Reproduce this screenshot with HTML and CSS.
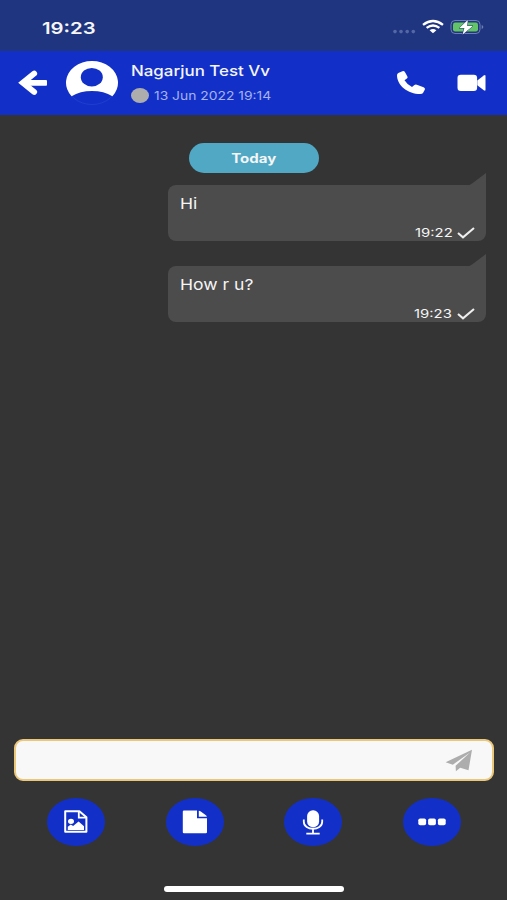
FILE: index.html
```html
<!DOCTYPE html>
<html lang="en">
<head>
<meta charset="utf-8">
<title>Chat</title>
<link rel="stylesheet" href="styles.css">
</head>
<body>
  <div class="statusbar">
    <span class="clock wide">19:23</span>
    <svg class="status-icons" width="92" height="20" viewBox="0 0 92 20">
      <g fill="#5568a5">
        <circle cx="3" cy="13.6" r="1.8"/><circle cx="9" cy="13.6" r="1.8"/><circle cx="15.2" cy="13.6" r="1.8"/><circle cx="21.3" cy="13.6" r="1.8"/>
      </g>
      <g fill="none" stroke="#fff" stroke-width="2.3">
        <path d="M31 6.9Q41 -.9 51 6.9"/>
        <path d="M34.6 9.9Q41 5 47.4 9.9"/>
      </g>
      <path fill="#fff" d="M37.6 12.2Q41 9.7 44.4 12.2L41 15.2z"/>
      <rect x="59" y="2.5" width="29" height="13" rx="4" fill="none" stroke="#6b80b0"/>
      <rect x="61" y="4.5" width="25" height="9" rx="2.2" fill="#62c466"/>
      <path d="M89.7 7v4q1.6-.6 1.6-2t-1.6-2z" fill="#6b80b0"/>
      <path d="M75.8 2L67.4 10h5l-1.8 6.4L80.8 8h-5.6z" fill="#fff" stroke="#203580" stroke-width="1" paint-order="stroke"/>
    </svg>
  </div>

  <div class="header">
    <svg class="back" width="30" height="28" viewBox="0 0 30 28">
      <path d="M16.2 4.6L4.8 13.8L16.2 23" fill="none" stroke="#fff" stroke-width="5.8" stroke-linecap="round"/>
      <rect x="6" y="10.9" width="23" height="5.8" rx="1" fill="#fff"/>
    </svg>
    <svg class="avatar" width="52" height="44" viewBox="0 0 52 44">
      <ellipse cx="26" cy="22" rx="25.6" ry="21.5" fill="#1230c8" stroke="#2b48cf" stroke-width=".6"/>
      <path fill="#fff" d="M5.6 35.2A26 21.7 0 1 1 46.4 35.2Q38 30 26 30T5.6 35.2z"/>
      <ellipse cx="25.8" cy="16.2" rx="11" ry="9.3" fill="#1230c8"/>
    </svg>
    <div class="contact">
      <div class="name"><span class="wide">Nagarjun Test Vv</span></div>
      <div class="seen"><i class="presence"></i><span class="wide">13 Jun 2022 19:14</span></div>
    </div>
    <svg class="call" width="30" height="26" viewBox="0 0 30 26">
      <path fill="#fff" d="M2.3 3.1L6.4 1.2Q8 .6 8.9 2.1L11.4 6.4Q12 7.6 10.9 8.5L8.5 10.2Q11.1 14.4 16 17.1L18.4 15.1Q19.3 14.3 20.8 14.8L27.6 17.3Q29.4 18.1 28.9 19.6L27 23Q26.4 24 24.2 24C12 24 1 15.5 1 5.2Q1 3.8 2.3 3.1z"/>
    </svg>
    <svg class="video" width="29" height="18" viewBox="0 0 29 18">
      <rect x=".5" y=".8" width="19.6" height="16.2" rx="3.3" fill="#fff"/>
      <path fill="#fff" d="M20.3 6.5L26.8 1.4Q28.5.4 28.5 2V15.7Q28.5 17.3 26.8 16.2L20.3 11.2z"/>
    </svg>
  </div>

  <div class="messages">
    <div class="day"><span>Today</span></div>
    <div class="bubble">
      <svg class="tail" width="20" height="13" viewBox="0 0 20 13"><path fill="#4c4c4c" d="M0 13Q3 12.6 6 10.5L20 0V13z"/></svg>
      <div class="text"><span class="wide">Hi</span></div>
      <div class="meta"><span class="wide">19:22</span><svg width="18" height="12" viewBox="0 0 18 12"><path d="M1 6l5 4.3L17 1" fill="none" stroke="#eee" stroke-width="2.1"/></svg></div>
    </div>
    <div class="bubble">
      <svg class="tail" width="20" height="13" viewBox="0 0 20 13"><path fill="#4c4c4c" d="M0 13Q3 12.6 6 10.5L20 0V13z"/></svg>
      <div class="text"><span class="wide">How r u?</span></div>
      <div class="meta"><span class="wide">19:23</span><svg width="18" height="12" viewBox="0 0 18 12"><path d="M1 6l5 4.3L17 1" fill="none" stroke="#eee" stroke-width="2.1"/></svg></div>
    </div>
  </div>

  <div class="composer">
    <svg width="28" height="23" viewBox="0 0 28 23">
      <path fill="#adadad" d="M27 .8L.6 13.2l7.2 2.5L25 3.4L10.6 16.8l.3 5.4 4.3-3.4 8.3 2.4z"/>
    </svg>
  </div>

  <div class="actions">
    <div class="action">
      <svg width="26" height="24" viewBox="0 0 26 24">
        <path d="M2.2 1.2h14.2l7 6v14.6H2.2z" fill="none" stroke="#fff" stroke-width="2" stroke-linejoin="round"/>
        <path d="M15.8 1.2v6.5h7.6" fill="none" stroke="#fff" stroke-width="1.8"/>
        <ellipse cx="8" cy="11.3" rx="3" ry="2.6" fill="#fff"/>
        <path d="M4.8 20v-3.2l3-2.3 2.3 1.5 5.5-4.4 5.4 4.6V20z" fill="#fff"/>
      </svg>
    </div>
    <div class="action">
      <svg width="26" height="24" viewBox="0 0 26 24">
        <path d="M2 .5h13v7.8h10v13.9q0 1-1.2 1H2q-1.2 0-1.2-1V1.5Q.8.5 2 .5z" fill="#fff"/>
        <path d="M16.8.7q1 .1 2 .9l5.1 3.6q.9.7.9 1.6h-8z" fill="#fff"/>
      </svg>
    </div>
    <div class="action">
      <svg width="22" height="25" viewBox="0 0 22 25">
        <rect x="5.1" y=".3" width="12" height="17" rx="5.8" fill="#fff"/>
        <path d="M1.8 9.5v2.2c0 9.4 18.4 9.4 18.4 0V9.5M11 18.8v4.6M4.3 23.6h13.4" fill="none" stroke="#fff" stroke-width="1.8"/>
      </svg>
    </div>
    <div class="action">
      <svg width="28" height="8" viewBox="0 0 28 8" fill="#fff">
        <rect x=".3" y=".4" width="7.8" height="6.8" rx="1.8"/><rect x="10.1" y=".4" width="7.8" height="6.8" rx="1.8"/><rect x="19.9" y=".4" width="7.8" height="6.8" rx="1.8"/>
      </svg>
    </div>
  </div>

  <div class="home"></div>
</body>
</html>
```

FILE: styles.css
```css
html, body {
  height: 100%;
}
body {
  margin: 0;
  display: flex;
  flex-direction: column;
  overflow: hidden;
  background: #343434;
  color: #f5f5f5;
  font-family: Inter, "Liberation Sans", sans-serif;
}
svg {
  display: block;
  flex: none;
}
/* the phone type is wider than Inter */
.wide {
  display: inline-block;
  white-space: nowrap;
  transform: scaleX(1.2);
  transform-origin: left center;
}

.statusbar {
  flex: none;
  display: flex;
  justify-content: space-between;
  height: 51px;
  box-sizing: border-box;
  padding: 18px 23px 0 42px;
  background: #203580;
}
.clock {
  font-size: 16.5px;
  line-height: 20px;
  font-weight: 600;
  transform: scaleX(1.23);
}

.header {
  flex: none;
  display: flex;
  align-items: center;
  height: 64px;
  box-sizing: border-box;
  padding: 0 21px 0 18px;
  background: #1230c8;
}
.avatar {
  margin-left: 18px;
}
.contact {
  flex: 1;
  margin-left: 13px;
}
.name {
  font-size: 14.5px;
  line-height: 20px;
  font-weight: 500;
}
.name .wide {
  transform: scaleX(1.165);
}
.seen {
  display: flex;
  align-items: center;
  gap: 6px;
  margin-top: 5px;
  color: #a5b2ee;
  font-size: 12px;
  line-height: 20px;
}
.seen .wide {
  margin-left: -1px;
  transform: scaleX(1.155);
}
.presence {
  width: 18px;
  height: 15px;
  border-radius: 50%;
  background: #adadad;
}
.call {
  margin-right: 31px;
}

.messages {
  flex: 1;
  padding: 28px 21px 0 168px;
}
.day {
  width: 130px;
  height: 30px;
  margin-left: 21px;
  border-radius: 15px;
  background: #50a8c4;
  font-size: 12.5px;
  line-height: 31px;
  font-weight: 700;
  text-align: center;
}
.day span {
  display: inline-block;
  transform: scaleX(1.2);
}
.bubble {
  position: relative;
  height: 56px;
  box-sizing: border-box;
  margin: 12px 0 25px;
  padding: 9px 11px 0 12px;
  border-radius: 8px;
  border-top-right-radius: 0;
  background: #4c4c4c;
}
.tail {
  position: absolute;
  right: 0;
  top: -12px;
}
.text {
  font-size: 15px;
  line-height: 20px;
}
.text .wide {
  transform: scaleX(1.17);
}
.meta {
  display: flex;
  justify-content: flex-end;
  align-items: center;
  gap: 12px;
  margin-top: 10px;
  font-size: 12px;
  line-height: 18px;
}
.meta .wide {
  transform: scaleX(1.24);
}

.composer {
  flex: none;
  display: flex;
  align-items: center;
  justify-content: flex-end;
  height: 42px;
  box-sizing: border-box;
  margin: 0 13px 17px 14px;
  padding: 1px 19px 0 0;
  border: 2px solid #ebc77a;
  border-radius: 9px;
  background: #f8f8f8;
}

.actions {
  flex: none;
  display: flex;
  justify-content: space-between;
  padding: 0 46px 0 47px;
}
.action {
  display: flex;
  align-items: center;
  justify-content: center;
  width: 58px;
  height: 48px;
  border-radius: 50%;
  background: #1230c8;
}

.home {
  flex: none;
  width: 180px;
  height: 6px;
  margin: 40px 0 8px 164px;
  border-radius: 3px;
  background: #fff;
}
```
